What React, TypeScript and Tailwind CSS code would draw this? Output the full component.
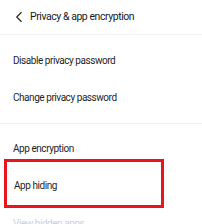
import { ChevronLeft } from 'lucide-react'

function Row({ label, className = 'h-[37px]' }: { label: string; className?: string }) {
  return (
    <div className={`${className} flex items-center px-[13px] text-[10px] tracking-[-0.45px] text-[#1f1f1f]`}>
      {label}
    </div>
  )
}

export default function App() {
  return (
    <div className="w-[202px] h-[224px] overflow-hidden bg-white font-['Roboto',sans-serif]">
      {/* Header */}
      <div className="h-[35px] flex items-center pl-[10px] gap-[2px] border-b border-[#f3f3f3]">
        <ChevronLeft className="w-[18px] h-[18px] text-[#222]" strokeWidth={1.5} />
        <span className="text-[10.5px] tracking-[-0.45px] text-[#1a1a1a]">Privacy &amp; app encryption</span>
      </div>

      <div className="pt-[7px] pb-[7px] border-b border-[#f3f3f3]">
        <Row label="Disable privacy password" />
        <Row label="Change privacy password" />
      </div>

      <div className="pt-[10px]">
        <Row label="App encryption" className="h-[28px]" />
        <div className="ml-[4px] -mt-[3px] w-[160px] h-[49px] border-[3px] border-[#e8141f] flex items-center pl-[7px] pt-[3px] text-[10px] tracking-[-0.45px] text-[#1f1f1f]">
          App hiding
        </div>
        <div className="h-[30px] flex items-center px-[13px] text-[10px] tracking-[-0.45px] text-[#c8cfe3]">
          View hidden apps
        </div>
      </div>
    </div>
  )
}
